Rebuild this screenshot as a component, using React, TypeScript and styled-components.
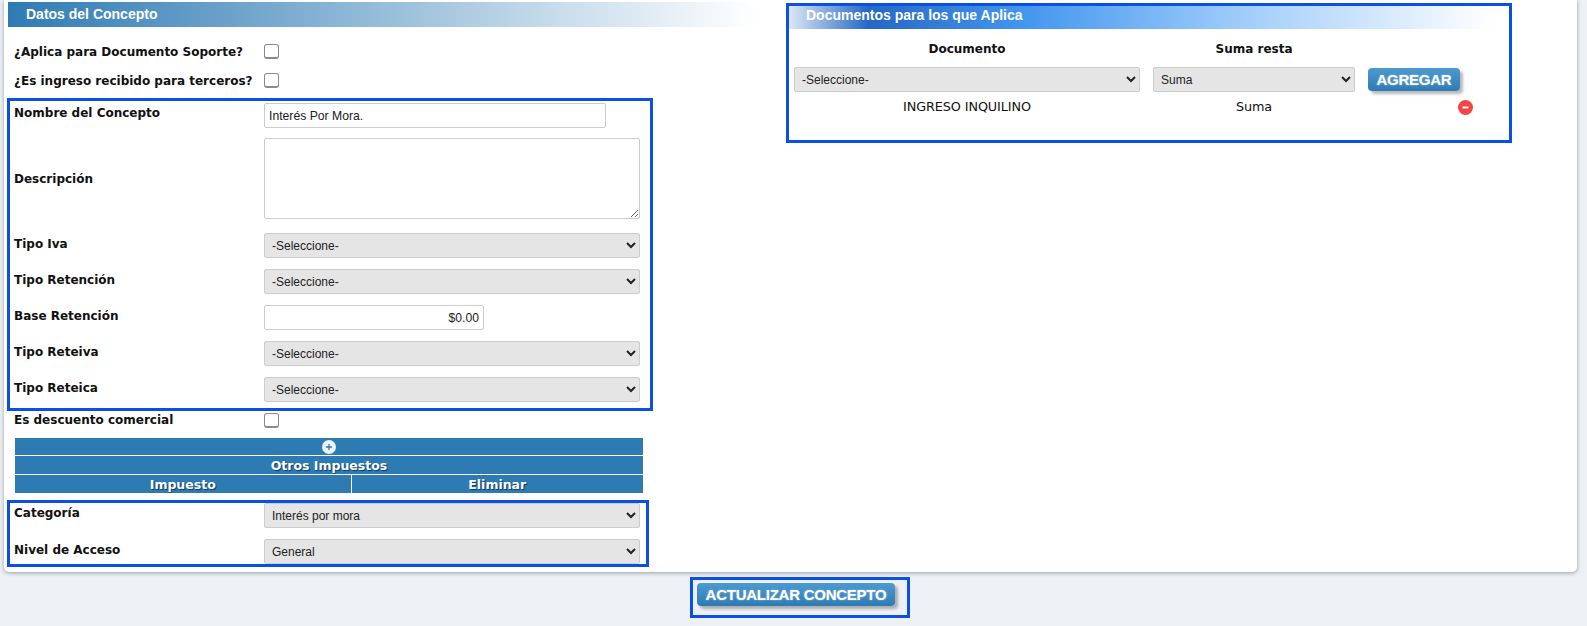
import React from "react";
import styled, { createGlobalStyle } from "styled-components";

const Global = createGlobalStyle`
  html, body { margin: 0; padding: 0; background: #edf0f5; }
  body { width: 1587px; height: 626px; overflow: hidden; font-family: "Liberation Sans", Arial, sans-serif; }
  * { box-sizing: border-box; }
`;

const Panel = styled.main`
  display: grid;
  grid-template-columns: 779px 726px;
  align-items: start;
  margin: 0 10px 0 4px;
  height: 572px;
  padding: 2px 0 0 3px;
  background: #fff;
  border-radius: 0 0 5px 5px;
  box-shadow: 0 1px 4px rgba(0, 0, 0, 0.35);
`;

const LeftColumn = styled.section`
  display: flex;
  flex-direction: column;
  align-items: flex-start;
`;

const RightColumn = styled.section`
  margin-top: 1px;
  height: 140px;
  border: 3px solid #0a4fe6;
`;

const LeftHeader = styled.h2`
  width: 748px;
  height: 25px;
  margin: 0 0 0 1px;
  padding: 0 0 0 18px;
  color: #fff;
  font: bold 14px/25px "Liberation Sans", Arial, sans-serif;
  background: linear-gradient(90deg, #2e7bb4 0%, #ffffff 100%);
`;

const RightHeader = styled.h2`
  height: 23px;
  margin: 0;
  padding: 0 0 0 17px;
  color: #fff;
  font: bold 14px/19px "Liberation Sans", Arial, sans-serif;
  background: linear-gradient(90deg, #dce7f3 0%, #2568c6 11%, #4497ef 33%, #a6d0fa 65%, #ffffff 98%);
`;

const Label = styled.label<{ $pb?: number }>`
  padding-bottom: ${(p) => p.$pb ?? 4}px;
  color: #111;
  font: bold 12px/16px "DejaVu Sans", sans-serif;
`;

const Row = styled.div<{ $top?: number }>`
  display: grid;
  grid-template-columns: 250px auto;
  justify-content: start;
  align-items: center;
  margin-top: ${(p) => p.$top ?? 0}px;
  padding-left: 4px;
`;

const CheckRow = styled(Row)`
  height: 29px;
  margin-left: 3px;
`;

const PlainRow = styled(Row)`
  grid-template-rows: 15px;
  height: 15px;
  margin-left: 3px;
`;

const Group = styled.div<{ $width: number; $pad: number; $pb: number; $top: number }>`
  width: ${(p) => p.$width}px;
  margin-top: ${(p) => p.$top}px;
  padding: ${(p) => p.$pad}px 0 ${(p) => p.$pb}px;
  border: 3px solid #0a4fe6;
`;

const Check = styled.input.attrs({ type: "checkbox" })`
  appearance: none;
  width: 15px;
  height: 15px;
  margin: 0;
  background: #fff;
  border: 1px solid #8a8a8a;
  border-bottom-width: 2px;
  border-radius: 3px;
`;

const TextInput = styled.input<{ $width: number; $right?: boolean }>`
  width: ${(p) => p.$width}px;
  height: 25px;
  padding: 0 4px 0 4px;
  color: #222;
  font: 12.2px "Liberation Sans", Arial, sans-serif;
  text-align: ${(p) => (p.$right ? "right" : "left")};
  background: #fff;
  border: 1px solid #ccc;
  border-radius: 2px;
  outline: none;
`;

const TextArea = styled.textarea`
  display: block;
  width: 376px;
  height: 81px;
  margin: 0;
  background: #fff;
  border: 1px solid #ccc;
  border-radius: 2px;
`;

const Select = styled.select<{ $width?: number }>`
  display: block;
  width: ${(p) => p.$width ?? 376}px;
  height: 25px;
  padding: 0 3px;
  color: #222;
  font: 12px "Liberation Sans", Arial, sans-serif;
  background-color: #e5e5e5;
  border: 1px solid #ccc;
  border-radius: 2px;
`;

const TaxTable = styled.table`
  width: 628px;
  margin: 9px 0 0 8px;
  border-collapse: collapse;
  table-layout: fixed;
`;

const FirstColumn = styled.col`
  width: 336px;
`;

const HeadCell = styled.td`
  height: 18.4px;
  padding: 1px 0 0;
  color: #fff;
  font: bold 12.5px/17px "DejaVu Sans", sans-serif;
  text-align: center;
  vertical-align: middle;
  text-shadow: 1px 1px 1px #0d3a5e;
  background: #2e7bb4;
  border: 1px solid #fff;
  border-width: 1px 1px 0 0;
  &:last-child { border-right: 0; }
`;

const IconSvg = styled.svg`
  display: block;
  margin: 0 auto;
`;

const DocGrid = styled.div`
  display: grid;
  grid-template-columns: 346px 202px 105px;
  column-gap: 13px;
  align-items: center;
  padding: 12px 0 0 5px;
  color: #111;
  text-align: center;
`;

const DocLabel = styled.div`
  height: 26px;
  font: bold 12px/16px "DejaVu Sans", sans-serif;
`;

const DocValue = styled.div`
  padding-top: 7px;
  font: 12.8px/16px "DejaVu Sans", sans-serif;
  letter-spacing: -0.1px;
`;

const RemoveCell = styled.div`
  padding: 7px 0 0 90px;
`;

const RemoveIcon = styled.svg`
  display: block;
`;

const ActionButton = styled.button<{ $width: number }>`
  display: block;
  width: ${(p) => p.$width}px;
  height: 23px;
  padding: 0;
  color: #fff;
  font: bold 15px/22px "Liberation Sans", Arial, sans-serif;
  letter-spacing: -0.25px;
  text-shadow: 0 0 2px rgba(255, 255, 255, 0.5);
  background: linear-gradient(180deg, #4c9ad2 0%, #2e7bb4 100%);
  border: 0;
  border-radius: 4px;
  box-shadow: 3px 3px 3px rgba(0, 0, 0, 0.28);
`;

const Footer = styled.footer`
  width: 220px;
  height: 41px;
  margin: 5px 0 0 690px;
  padding: 3px 0 0 4px;
  border: 3px solid #0a4fe6;
`;

const Plus = () => (
  <IconSvg width="14" height="14" viewBox="0 0 14 14">
    <circle cx="7" cy="7" r="7" fill="#eef2f6" />
    <path d="M7 4v6M4 7h6" stroke="#2e7bb4" strokeWidth="1.3" />
  </IconSvg>
);

const Minus = () => (
  <RemoveIcon width="15" height="15" viewBox="0 0 15 15">
    <circle cx="7.5" cy="7.5" r="7.5" fill="#f44444" />
    <path d="M4.5 7.5h6" stroke="#fff" strokeWidth="2" />
  </RemoveIcon>
);

const Opt = ({ children }: { children: string }) => (
  <Select>
    <option>{children}</option>
  </Select>
);

export default function App() {
  return (
    <>
      <Global />
      <Panel>
        <LeftColumn>
          <LeftHeader>Datos del Concepto</LeftHeader>
          <CheckRow $top={10}>
            <Label $pb={0}>¿Aplica para Documento Soporte?</Label>
            <Check />
          </CheckRow>
          <CheckRow>
            <Label $pb={0}>¿Es ingreso recibido para terceros?</Label>
            <Check />
          </CheckRow>
          <Group $width={646} $pad={2} $pb={6} $top={3}>
            <Row>
              <Label $pb={6}>Nombre del Concepto</Label>
              <TextInput $width={342} defaultValue="Interés Por Mora." />
            </Row>
            <Row $top={10}>
              <Label $pb={0}>Descripción</Label>
              <TextArea />
            </Row>
            <Row $top={14}>
              <Label>Tipo Iva</Label>
              <Opt>-Seleccione-</Opt>
            </Row>
            <Row $top={11}>
              <Label>Tipo Retención</Label>
              <Opt>-Seleccione-</Opt>
            </Row>
            <Row $top={11}>
              <Label>Base Retención</Label>
              <TextInput $width={220} $right defaultValue="$0.00" />
            </Row>
            <Row $top={11}>
              <Label>Tipo Reteiva</Label>
              <Opt>-Seleccione-</Opt>
            </Row>
            <Row $top={11}>
              <Label>Tipo Reteica</Label>
              <Opt>-Seleccione-</Opt>
            </Row>
          </Group>
          <PlainRow $top={2}>
            <Label $pb={1}>Es descuento comercial</Label>
            <Check />
          </PlainRow>
          <TaxTable>
            <colgroup>
              <FirstColumn />
              <col />
            </colgroup>
            <tbody>
              <tr>
                <HeadCell colSpan={2}>
                  <Plus />
                </HeadCell>
              </tr>
              <tr>
                <HeadCell colSpan={2}>Otros Impuestos</HeadCell>
              </tr>
              <tr>
                <HeadCell>Impuesto</HeadCell>
                <HeadCell>Eliminar</HeadCell>
              </tr>
            </tbody>
          </TaxTable>
          <Group $width={642} $pad={0} $pb={0} $top={7}>
            <Row>
              <Label $pb={5}>Categoría</Label>
              <Opt>Interés por mora</Opt>
            </Row>
            <Row $top={11}>
              <Label>Nivel de Acceso</Label>
              <Opt>General</Opt>
            </Row>
          </Group>
        </LeftColumn>
        <RightColumn>
          <RightHeader>Documentos para los que Aplica</RightHeader>
          <DocGrid>
            <DocLabel>Documento</DocLabel>
            <DocLabel>Suma resta</DocLabel>
            <div />
            <Select $width={346}>
              <option>-Seleccione-</option>
            </Select>
            <Select $width={202}>
              <option>Suma</option>
            </Select>
            <ActionButton $width={92}>AGREGAR</ActionButton>
            <DocValue>INGRESO INQUILINO</DocValue>
            <DocValue>Suma</DocValue>
            <RemoveCell>
              <Minus />
            </RemoveCell>
          </DocGrid>
        </RightColumn>
      </Panel>
      <Footer>
        <ActionButton $width={198}>ACTUALIZAR CONCEPTO</ActionButton>
      </Footer>
    </>
  );
}
